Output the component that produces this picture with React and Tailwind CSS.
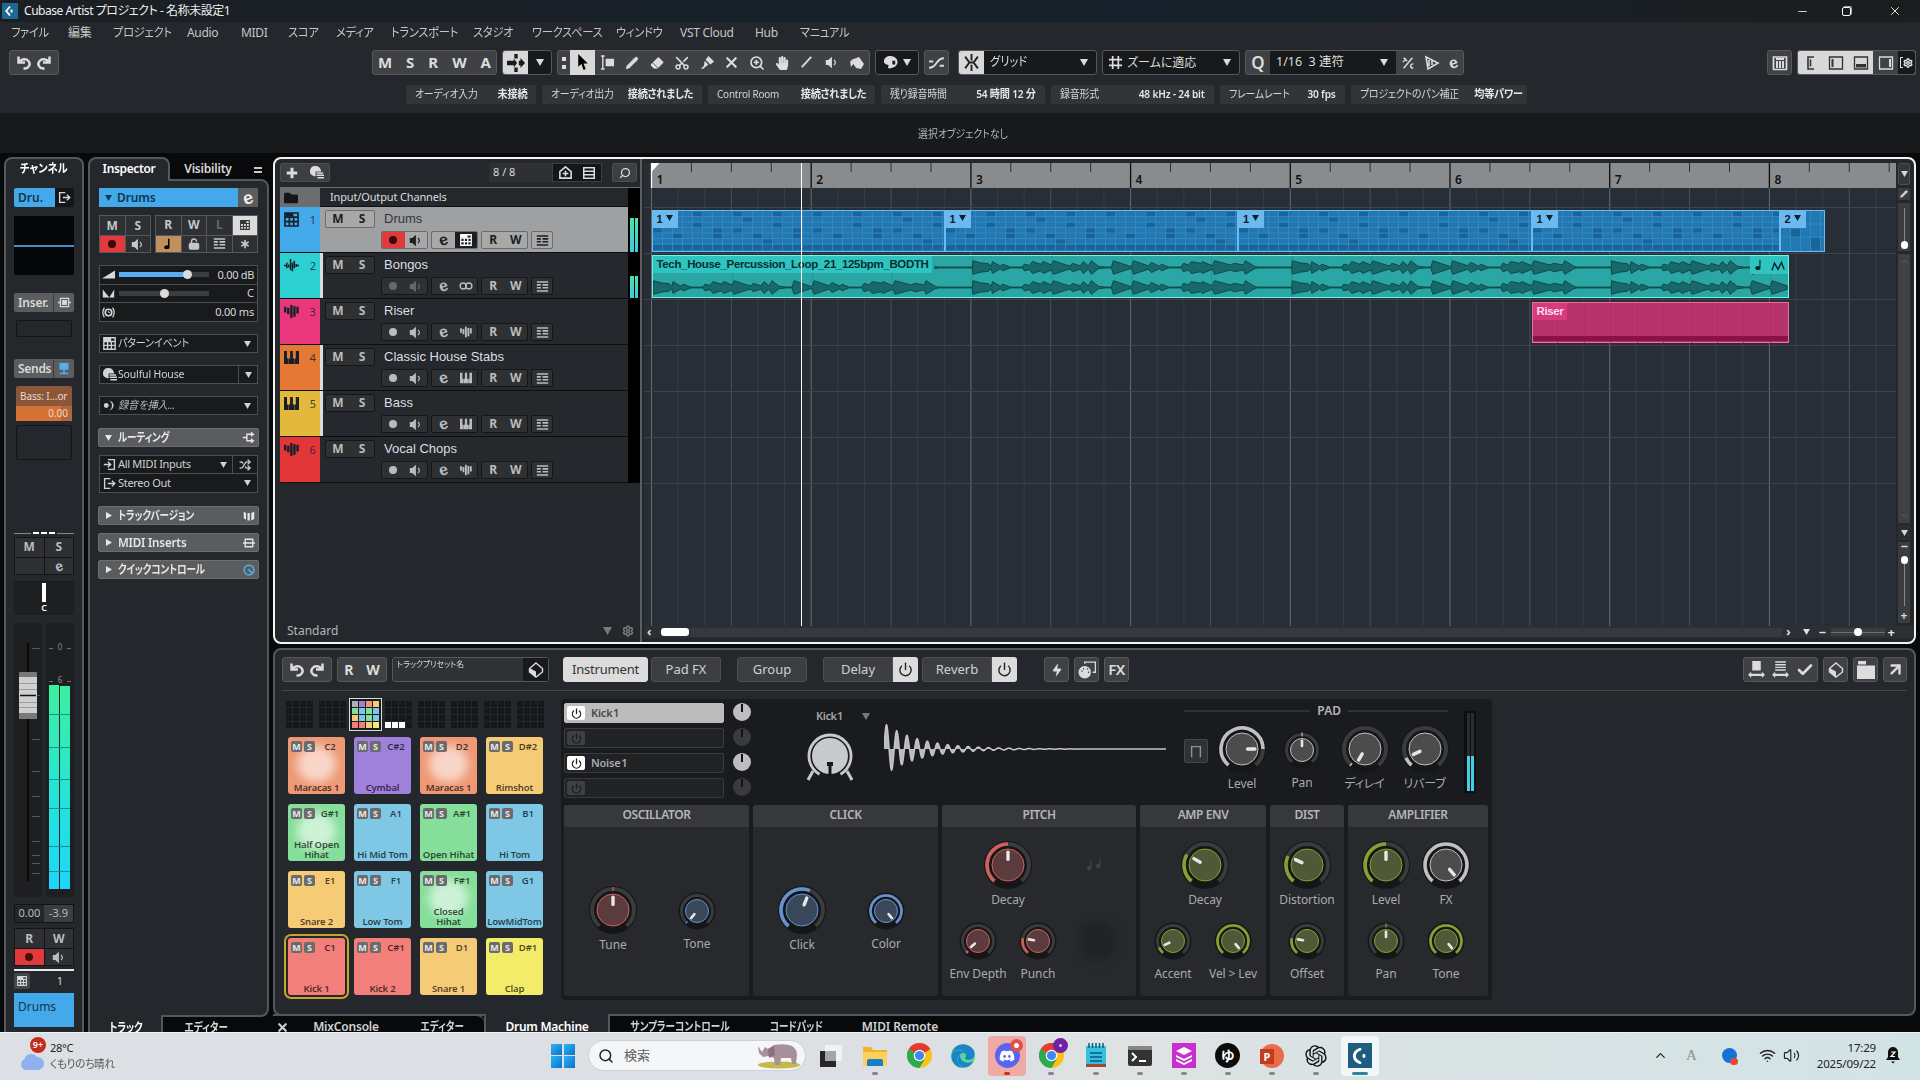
import clsx from "clsx";
import {
  Pencil, Eraser, Scissors, X, ZoomIn, Volume2, Wifi, Search, Settings,
  Zap, Power, Check, ArrowUpRight, Shuffle, LockOpen, Asterisk, Minus, ChevronUp,
} from "lucide-react";
import { FaDiscord, FaEdge, FaFolder, FaHandPaper } from "react-icons/fa";
import { RiOpenaiFill } from "react-icons/ri";

/* ---------- small icons ---------- */

const Svg = ({ w = 16, h = w, box = 16, className, children }) => (
  <svg width={w} height={h} viewBox={`0 0 ${box} ${box}`} className={clsx("shrink-0", className)} fill="currentColor">
    {children}
  </svg>
);

const Undo = ({ flip }) => (
  <Svg w={16} className={flip && "-scale-x-100"}>
    <path d="M2.500 1.500v6h6.500M3.500 7A5.300 4.600 0 1 1 9 13.500H7.500" fill="none" stroke="currentColor" strokeWidth="2.500" />
  </Svg>
);

const Down = ({ w = 8, className }) => (
  <svg width={w} height={w - 1} viewBox="0 0 8 7" fill="currentColor" className={clsx("shrink-0", className)}>
    <path d="M0 0h8L4 7z" />
  </svg>
);

const Right = () => (
  <svg width="6" height="7" viewBox="0 0 6 7" fill="currentColor" className="shrink-0">
    <path d="M0 0v7l6-3.5z" />
  </svg>
);

// kana set narrow
const Kana = ({ children, center }) => (
  <span className={clsx("inline-block scale-x-[.8] whitespace-nowrap", center ? "origin-center" : "origin-left")}>{children}</span>
);

const E = ({ className }) => (
  <span className={clsx("inline-block -rotate-[18deg] font-['Liberation_Sans'] text-[16px] leading-none font-bold", className)}>e</span>
);

const Dot = () => <span className="h-2 w-2 rounded-full bg-current" />;

const Spk = () => (
  <Svg w={13}>
    <path d="M1 5h3l4.500-4v14L4 11H1z" />
    <path d="M11 5q3.500 3 0 6" fill="none" stroke="currentColor" strokeWidth="1.5" />
  </Svg>
);

const PatternIcon = ({ w = 13 }) => (
  <Svg w={w}>
    <path d="M1 1h14v14H1zM5.700 5v10M10.300 5v10M1 5.500h14M1 10.300h14" fill="none" stroke="currentColor" strokeWidth="1.700" />
    <path d="M1 1h9v4H1z" />
  </Svg>
);

const WaveIcon = ({ w = 15 }) => (
  <Svg w={w}>
    <path d="M0 8h3M3 5v6M5 7v3M7 1v12M9 5v9M11 3v8M13 6.500v3M13 8h3" stroke="currentColor" strokeWidth="1.6" fill="none" />
  </Svg>
);

const SamplerIcon = ({ w = 13 }) => (
  <Svg w={w}>
    <path d="M0 3h2.500v6H0zM3.300 4h2.500v7H3.300zM6.600 1h2.500v14H6.600zM9.900 2.500h2.500v11H9.900zM13.200 3h2.500v7h-2.500z" />
  </Svg>
);

const KeysIcon = ({ w = 13 }) => (
  <Svg w={w}>
    <path d="M0 1h3.200v8h1.600v6H0zM6.500 1h3v8H11v6H5.200V9h1.300zM12.600 1H16v14h-4.600V9h1.200z" />
  </Svg>
);

const LanesIcon = () => (
  <Svg w={13}>
    <path d="M1 2.500h14M1 6h5M8 6h7M1 9.500h5M8 9.500h7M1 13.500h14" stroke="currentColor" strokeWidth="2" fill="none" />
  </Svg>
);

const InIcon = ({ out }) => (
  <Svg w={13}>
    {out ? (
      <path d="M9 2H2v12h7M6 8h8M11 4.500L14.500 8 11 11.500" fill="none" stroke="currentColor" strokeWidth="1.7" />
    ) : (
      <path d="M6 2h8v12H6M1 8h8M6 4.500L9.500 8 6 11.500" fill="none" stroke="currentColor" strokeWidth="1.7" />
    )}
  </Svg>
);

const Cube = ({ w = 16 }) => (
  <Svg w={w}>
    <path d="M8 1l6.500 5.500V10L8 15 1.500 10V6.500z" fill="none" stroke="currentColor" strokeWidth="1.4" />
    <path d="M1.500 6L8 9.500V15l-6.500-5z" />
  </Svg>
);

const PresetIcon = () => (
  <Svg w={15}>
    <path d="M6.500 1a5.500 5.500 0 0 0-1 10.900L7 12V7h6A6 6 0 0 0 6.500 1z" />
    <path d="M8 8.500h7M8 11h8M9 13.500h7" stroke="currentColor" strokeWidth="1.6" />
  </Svg>
);

/* ---------- top: title, menu, toolbar, info line ---------- */

const MENU = [
  ["ファイル", "w-[57px]"], ["編集", "w-[45px]"], ["プロジェクト", "w-[74px]"], ["Audio", "w-[54px]"], ["MIDI", "w-[47px]"],
  ["スコア", "w-[48px]"], ["メディア", "w-[55px]"], ["トランスポート", "w-[82px]"], ["スタジオ", "w-[59px]"],
  ["ワークスペース", "w-[84px]"], ["ウィンドウ", "w-[64px]"], ["VST Cloud", "w-[75px]"], ["Hub", "w-[45px]"], ["マニュアル", "w-[60px]"],
];

const TitleBar = () => (
  <div className="flex h-[22px] shrink-0 items-center bg-gradient-to-r from-[#1a1f23] via-[#17212b] via-60% to-[#1b1d1e]">
    <span className="ml-0.5 grid h-4 w-4 place-items-center bg-[#1b6a94] text-white">
      <Svg w={12}><path d="M8 2L3 8l5 6M10 6v4" fill="none" stroke="white" strokeWidth="2.500" /></Svg>
    </span>
    <span className="ml-[6px] text-[12px] tracking-[-0.45px] text-[#f0f0f0]">Cubase Artist プロジェクト - 名称未設定1</span>
    <div className="ml-auto flex items-center text-white">
      <Minus size={13} strokeWidth={1.5} className="mr-[33px]" />
      <span className="mr-[37px] h-[9px] w-[9px] rounded-[2px] border border-white shadow-[1px_-1px_0_0_#aaa]" />
      <X size={14} strokeWidth={1.500} className="mr-[18px]" />
    </div>
  </div>
);

const Menu = () => (
  <div className="flex h-6 shrink-0 items-center pb-[2px] pl-[11px] text-[12px] tracking-[-0.3px] text-[#c4c6c8]">
    {MENU.map(([label, w]) => (
      <span key={label} className={clsx("shrink-0 whitespace-nowrap", w)}>
        {/^[A-Z]/.test(label) || label === "編集" ? label : <span className="inline-block origin-left scale-x-[.94]">{label}</span>}
      </span>
    ))}
  </div>
);

const group = "flex h-[25px] shrink-0 items-center rounded-[3px] border border-[#56585b] bg-[#3f4144] text-[#dcdcdc]";

const Toolbar = () => (
  <div className="flex h-9 items-start pt-[4px] pr-[4px] pl-[9px]">
    <div className={clsx(group, "w-[50px] justify-around px-1")}><Undo /><Undo flip /></div>
    <div className={clsx(group, "ml-[313px] w-[125px] justify-between px-[5px] text-[15px] font-bold")}>
      {["M", "S", "R", "W", "A"].map((l) => <span key={l}>{l}</span>)}
    </div>
    <div className={clsx(group, "ml-[5px] w-[50px] overflow-hidden !bg-[#17191b]")}>
      <span className="grid h-full w-[25px] place-items-center bg-[#d8d8d8] text-[#1a1a1a]">
        <Svg w={18}><path d="M0 6h6V4l3 4-3 4v-2H0zM10.500 6H12V3.500l4 4.500-4 4.500V10h-1.500zM6.500 0h3v4h-3zM6.500 12h3v4h-3z" /></Svg>
      </span>
      <Down className="mx-auto" />
    </div>
    <div className={clsx(group, "ml-[5px] w-[313px]")}>
      <span className="flex w-3 flex-col items-center gap-1"><i className="h-1 w-1 bg-current" /><i className="h-1 w-1 bg-current" /></span>
      <span className="grid h-[25px] w-[25px] place-items-center bg-[#d8d8d8] text-black">
        <Svg w={17}><path d="M4 0v12l3-2.500L9 15l2-1-2-5h4z" /></Svg>
      </span>
      <div className="grid flex-1 grid-cols-11 place-items-center">
        <Svg w={15}><path d="M1 1h4M1 15h4M3 1v14" stroke="currentColor" strokeWidth="1.500" /><path d="M6 4h9v8H6z" /></Svg>
        <Pencil size={14} fill="currentColor" strokeWidth={1} />
        <Eraser size={16} fill="currentColor" strokeWidth={1} stroke="#333" />
        <Scissors size={16} strokeWidth={2.300} className="-rotate-90" />
        <Svg w={15}><path d="M9 1l6 6-4 3-5-5zM5 6l4 4-6 5-2-1 3-2z" /></Svg>
        <X size={17} strokeWidth={3} />
        <ZoomIn size={16} strokeWidth={2.500} />
        <FaHandPaper size={14} />
        <Svg w={15}><path d="M3 13L13 2" stroke="currentColor" strokeWidth="2" /></Svg>
        <Spk />
        <Svg w={16}><path d="M2 5l8-3 5 7-3 5-5-1zM1 6l5 1-4 5z" /></Svg>
      </div>
    </div>
    <div className={clsx(group, "ml-[5px] w-[44px] justify-around !bg-[#17191b] px-1")}>
      <Svg w={15}><path d="M8 1a7 6 0 0 1 0 13c-3 1-3-1-2-2.500S1 11 1 7s3-6 7-6zm2 5v4h3V6z" fillRule="evenodd" /></Svg><Down />
    </div>
    <div className={clsx(group, "ml-[5px] w-[25px] justify-center")}>
      <Svg w={17}><path d="M1 13c8 0 6-9 14-9M1 7h4M11 11h4" fill="none" stroke="currentColor" strokeWidth="1.800" /></Svg>
    </div>
    <div className={clsx(group, "ml-[9px] w-[139px] overflow-hidden !bg-[#17191b] text-[12.5px]")}>
      <span className="grid h-full w-[25px] place-items-center bg-[#d8d8d8] text-[#222]">
        <Svg w={17}><path d="M8 0v6M8 10v6M2 2.500l4 5.500-4 5.500M14 2.500L10 8l4 5.500M5 8h6" fill="none" stroke="currentColor" strokeWidth="1.800" /></Svg>
      </span>
      <span className="ml-1.5"><span className="inline-block origin-left scale-x-[.9]">グリッド</span></span><Down className="ml-auto mr-[8px]" />
    </div>
    <div className={clsx(group, "ml-[5px] w-[138px] !bg-[#17191b] text-[12px]")}>
      <Svg w={15} className="ml-[5px]"><path d="M5 1v14M11 1v14M1 5h14M1 11h14" stroke="currentColor" strokeWidth="1.800" /></Svg>
      <span className="ml-[4px]">ズームに適応</span><Down className="ml-auto mr-[8px]" />
    </div>
    <div className={clsx(group, "ml-[5px] w-[219px] text-[12.5px]")}>
      <span className="w-[24px] text-center text-[17px] font-semibold">Q</span>
      <span className="flex h-full w-[126px] items-center bg-[#17191b] pl-1.5">1/16&nbsp; 3 連符<Down className="ml-auto mr-[8px]" /></span>
      <span className="flex flex-1 items-center justify-around">
        <Svg w={14}><path d="M3 14L13 2M3 2l4 4M2 7l4-4M14 9c-4 0-4 5 0 5" fill="none" stroke="currentColor" strokeWidth="1.600" /></Svg>
        <Svg w={16}><path d="M2 2l12 6L4 14zM5 5v6M8 5v5" fill="none" stroke="currentColor" strokeWidth="1.600" /></Svg>
        <E />
      </span>
    </div>
    <div className={clsx(group, "ml-auto w-[25px] justify-center")}>
      <Svg w={16}><path d="M1.500 2h13v12.500h-13z" fill="none" stroke="currentColor" strokeWidth="1.700" /><path d="M4 6h2v7H4zM7 6h2v7H7zM10 6h2v7h-2zM4 3h8v2H4z" /></Svg>
    </div>
    <div className={clsx(group, "ml-[5px] w-[119px] overflow-hidden !bg-[#d8d8d8] !text-[#333]")}>
      <span className="grid w-[25px] place-items-center"><Svg w={16}><path d="M11 2H5v12h6M7.500 4.500v7" fill="none" stroke="currentColor" strokeWidth="1.600" /></Svg></span>
      <span className="grid w-[25px] place-items-center"><Svg w={16}><path d="M1.500 2h13v12h-13z" fill="none" stroke="currentColor" strokeWidth="1.300" /><path d="M3.500 4h2v8h-2z" /></Svg></span>
      <span className="grid w-[25px] place-items-center"><Svg w={16}><path d="M1.500 2h13v12h-13z" fill="none" stroke="currentColor" strokeWidth="1.300" /><path d="M3 9h10v3.500H3z" /></Svg></span>
      <span className="grid h-full w-[25px] place-items-center bg-[#3f4144] text-[#dcdcdc]"><Svg w={16}><path d="M1.500 2h13v12h-13z" fill="none" stroke="currentColor" strokeWidth="1.300" /><path d="M11 4h2v8h-2z" /></Svg></span>
      <span className="flex h-full flex-1 items-center justify-center bg-[#17191b] text-[#dcdcdc]"><i className="h-[11px] w-[3px] border border-r-0 border-current" /><Settings size={10} strokeWidth={3.500} /></span>
    </div>
  </div>
);

const INFO = [
  ["オーディオ入力", "未接続", "w-[130px]"], ["オーディオ出力", "接続されました", "w-[160px]"], ["Control Room", "接続されました", "w-[167px]"],
  ["残り録音時間", "54 時間 12 分", "w-[164px]"], ["録音形式", "48 kHz - 24 bit", "w-[163px]"], ["フレームレート", "30 fps", "w-[125px]"],
  ["プロジェクトのパン補正", "均等パワー", "w-[176px]"],
];

const InfoLine = () => (
  <div className="flex h-[31px] gap-[6px] pt-[3px] pl-[406px]">
    {INFO.map(([k, v, w]) => (
      <div key={k} className={clsx("flex h-[19px] shrink-0 items-center justify-between rounded-[2px] bg-[#323438] px-[9px] text-[11px] tracking-[-0.2px] whitespace-nowrap text-[#d4d4d4]", w)}>
        <span className="inline-block origin-left scale-x-[.9]">{k}</span>
        <span className="inline-block origin-right scale-x-[.92] font-semibold text-[#e6e6e6]">{v}</span>
      </div>
    ))}
  </div>
);

/* ---------- channel strip ---------- */

const cell = "grid place-items-center bg-[#2e3033]";

const FADER_MARKS = [25, 72, 116, 148, 173, 193, 218, 232, 240, 250];

const ChannelStrip = () => (
  <div className="mt-[4px] flex w-[80px] flex-col rounded-t-lg border-2 border-b-0 border-[#55585a] bg-[#24272b] px-[8px] text-[#d8d8d8]">
    <div className="mt-[1px] h-[21px] text-center text-[12px] font-semibold whitespace-nowrap text-white"><span className="inline-block scale-x-[.86]">チャンネル</span></div>
    <div className="mt-[7px] flex h-[19px] items-center">
      <span className="flex h-full w-[41px] items-center rounded-l-[2px] bg-[#44a9ea] pl-1 text-[12px] font-semibold text-[#10364f]">Dru.</span>
      <span className="grid h-full flex-1 place-items-center bg-[#141618]"><InIcon out /></span>
    </div>
    <div className="mt-[9px] flex h-[59px] items-center bg-[#060708]"><i className="h-[2px] w-full bg-[#3f8fcb]" /></div>
    <div className="mt-[18px] flex h-[19px] items-center rounded-[2px] bg-[#5a5c5e] text-[12px] font-semibold">
      <span className="w-[40px] border-r border-[#3a3c3e] pl-1 tracking-[-0.2px]">Inser.</span>
      <Svg w={13} className="mx-auto"><path d="M3 3h10v10H3zM0 8h3M13 8h3" fill="none" stroke="currentColor" strokeWidth="1.600" /><path d="M5 5h6v6H5z" /></Svg>
    </div>
    <div className="mx-[2px] mt-[8px] h-[17px] rounded-[2px] border border-[#131517]" />
    <div className="mt-[22px] flex h-[19px] items-center rounded-[2px] bg-[#5a5c5e] text-[12px] font-semibold">
      <span className="w-[40px] border-r border-[#3a3c3e] pl-[4px] tracking-[-0.3px]">Sends</span>
      <Svg w={12} className="mx-auto text-[#56aef0]"><path d="M2 0h12v9H2zM7 9h2v6H7zM2 13h12v2H2z" /></Svg>
    </div>
    <div className="mx-[2px] mt-[8px] flex h-[35px] flex-col rounded-[2px] bg-[#8b5738] text-[10px] leading-[20px] text-[#ecd9cb]">
      <span className="h-[20px] pl-[4px] tracking-[-0.1px] whitespace-nowrap">Bass: I...or</span>
      <span className="h-[15px] bg-gradient-to-r from-[#d47236] from-80% to-[#b0673b] to-80% pr-[4px] text-right leading-[15px]">0.00</span>
    </div>
    <div className="mx-[2px] mt-[4px] h-[35px] rounded-[2px] border border-[#131517]" />
    <div className="mt-[72px] flex h-[2px] items-center justify-between">
      <i className="h-px w-[17px] bg-[#85878a]" /><i className="h-[2px] w-[22px] border-t-2 border-dashed border-white" /><i className="h-px w-[17px] bg-[#85878a]" />
    </div>
    <div className="mt-[3px] grid h-[38px] grid-cols-2 gap-px border border-[#121416] bg-[#121416] text-[12px] leading-[16px] font-bold text-[#b9bbbd]">
      <span className={cell}>M</span><span className={cell}>S</span><span className={cell} /><span className={cell}><E className="!text-[14px]" /></span>
    </div>
    <div className="mt-[6px] flex h-[34px] flex-col items-center rounded-[3px] border border-[#1b1d1f] bg-[#1d1f20] text-[9px] leading-[12px] font-semibold text-white">
      <i className="mt-px h-[19px] w-1 bg-white" />C
    </div>
    <div className="mt-[8px] flex h-[274px] gap-1">
      <div className="w-[28px] rounded-[3px] bg-[#1d1f20]">
        <svg width="28" height="274">
          <path d="M14 20v238" stroke="#0a0808" strokeWidth="2" />
          {FADER_MARKS.map((y) => <path key={y} d={`M18 ${y}.5h8`} stroke="#55585a" />)}
          <rect x="5" y="49" width="18" height="47" rx="1" fill="#77797b" />
          <rect x="5" y="54" width="18" height="36" fill="#cfcfcf" />
          <path d="M5 60.500h18M5 66.500h18M5 79.500h18M5 84.500h18" stroke="#9d9d9d" />
          <path d="M6 72.500h16" stroke="#111" strokeWidth="1.500" />
        </svg>
      </div>
      <div className="w-[28px] rounded-[3px] bg-[#1d1f20]">
        <svg width="28" height="274">
          <defs>
            <linearGradient id="meter" x1="0" y1="0" x2="0" y2="1">
              <stop offset="0" stopColor="#3cf0a0" /><stop offset="0.6" stopColor="#22e3dc" /><stop offset="1" stopColor="#1fd5fa" />
            </linearGradient>
          </defs>
          <path d="M3 25.500h4M21 25.500h4M3 58.500h4M21 58.500h4" stroke="#6b6d6f" />
          <text x="14" y="27" fontSize="8" textAnchor="middle" fill="#8a8c8e">0</text>
          <text x="14" y="60" fontSize="8" textAnchor="middle" fill="#8a8c8e">6</text>
          <rect x="3" y="62" width="10" height="204" fill="url(#meter)" />
          <rect x="14" y="63" width="10" height="203" fill="url(#meter)" />
          <path d="M3 91.500h21M3 124.500h21M3 156.500h21M3 185.500h21M3 223.500h21M3 248.500h21" stroke="#178f93" />
        </svg>
      </div>
    </div>
    <div className="mt-[7px] grid h-[19px] shrink-0 grid-cols-2 border border-[#121416] text-center text-[11px] leading-[16px] text-[#b9bbbd]">
      <span className="bg-[#232629]">0.00</span><span className="bg-[#3b3d40]">-3.9</span>
    </div>
    <div className="mt-[5px] grid h-[38px] shrink-0 grid-cols-2 gap-px border border-[#121416] bg-[#121416] text-[12px] leading-[16px] font-bold text-[#b9bbbd]">
      <span className={cell}>R</span><span className={cell}>W</span>
      <span className="grid place-items-center bg-[#e23a3c] text-[#4a0d0e]"><Dot /></span><span className={cell}><Spk /></span>
    </div>
    <i className="mt-[3px] h-[2px] shrink-0 bg-[#e8e8e8]" />
    <div className="mt-[2px] flex h-[16px] shrink-0 items-center justify-between pr-[11px] text-[11px]">
      <span className="grid h-4 w-4 place-items-center rounded-[2px] bg-[#44474a]"><PatternIcon w={10} /></span>1
    </div>
    <div className="mt-[4px] h-[34px] shrink-0 bg-[#44a9ea] pt-[5px] pl-1 text-[12px] text-[#11364f]">Drums</div>
  </div>
);

/* ---------- inspector ---------- */

const Section = ({ children, icon, open, className }) => (
  <div className={clsx("flex h-[19px] items-center rounded-[2px] border border-[#6c6e70] bg-[#5a5c5e] text-[12px] font-semibold text-[#e6e6e6]", className)}>
    <span className="grid w-[19px] place-items-center">{open ? <Down w={7} /> : <Right />}</span>
    <span className="tracking-[-0.2px] whitespace-nowrap">{children}</span>
    <span className="ml-auto grid w-[19px] place-items-center">{icon}</span>
  </div>
);

const Slot = ({ icon, children, split, className }) => (
  <div className={clsx("mx-[1px] flex h-[19px] items-center border border-[#4c4f52] bg-[#181a1c] text-[11px] tracking-[-0.15px] text-[#d0d2d4]", className)}>
    <span className="grid w-[18px] place-items-center">{icon}</span>
    <span className="whitespace-nowrap">{children}</span>
    <span className={clsx("ml-auto grid h-full w-[19px] place-items-center", split && "border-l border-[#4c4f52]")}><Down w={7} /></span>
  </div>
);

const Slider = ({ value, fill }) => (
  <span className="ml-[4px] flex h-[5px] w-[90px] items-center bg-[#3b3e41]">
    <i className={clsx("h-full", fill && "bg-[#58aef0]")} style={{ width: value }} />
    <i className="-ml-1 h-[9px] w-[9px] rounded-full bg-[#dcdcdc]" />
  </span>
);

const Inspector = () => (
  <div className="mt-[4px] ml-1 flex w-[181px] flex-col text-[#d8d8d8]">
    <div className="flex h-[22px]">
      <div className="relative -mb-[2px] h-[24px] w-[82px] shrink-0 rounded-t-lg border-2 border-b-0 border-[#55585a] bg-[#24272b] text-center text-[12px] leading-[20px] font-semibold tracking-[-0.35px] text-white">Inspector</div>
      <div className="w-[76px] text-center text-[12px] leading-[23px] font-semibold tracking-[-0.2px]">Visibility</div>
      <span className="mt-[10px] ml-[8px] h-[6px] w-[8px] border-y-2 border-[#c8c8c8]" />
    </div>
    <div className="h-[838px] rounded-tr-lg rounded-br-lg border-2 border-[#55585a] bg-[#24272b] px-[8px] pt-[7px]">
      <div className="mx-[1px] flex h-[19px] items-center bg-[#44a9ea] text-[12px] font-semibold tracking-[-0.1px] text-[#0f3550]">
        <span className="grid w-[18px] place-items-center"><Down w={7} /></span>Drums
        <span className="ml-auto grid h-full w-[20px] place-items-center bg-[#5a5c5e] text-[#ececec]"><E className="!text-[18px]" /></span>
      </div>
      <div className="mx-[1px] mt-[8px] flex gap-[4px] text-[12px] leading-[16px] font-bold text-[#c4c6c8]">
        <div className="grid h-[38px] w-[52px] grid-cols-2 gap-px bg-[#55585a] p-px">
          <span className={cell}>M</span><span className={cell}>S</span>
          <span className="grid place-items-center bg-[#e23a3c] text-[#3a090a]"><Dot /></span><span className={cell}><Spk /></span>
        </div>
        <div className="grid h-[38px] flex-1 grid-cols-4 gap-px bg-[#55585a] p-px">
          <span className={cell}>R</span><span className={cell}>W</span><span className={clsx(cell, "text-[#66686a]")}>L</span>
          <span className="grid place-items-center bg-[#dcdcdc] text-[#333]"><PatternIcon w={10} /></span>
          <span className="grid place-items-center bg-[#c0905c] text-black">
            <Svg w={12}><path d="M8 1h2v11a3.500 2.500 0 1 1-2-2z" /></Svg>
          </span>
          <span className={cell}><LockOpen size={12} strokeWidth={3} className="[&>rect]:fill-current" /></span><span className={cell}><LanesIcon /></span><span className={cell}><Asterisk size={14} strokeWidth={3} /></span>
        </div>
      </div>
      <div className="mx-[1px] mt-[12px] h-[57px] divide-y divide-[#4c4f52] border border-[#4c4f52] bg-[#181a1c] text-[11px] [&>div]:flex [&>div]:h-[18.500px] [&>div]:items-center [&>div]:pr-[3px] [&>div]:pl-[2px]">
        <div><Svg w={13}><path d="M0 13h16V3z" /></Svg><Slider value={68} fill /><span className="ml-auto tracking-[-0.3px]">0.00 dB</span></div>
        <div><Svg w={13}><path d="M1 3v10h8zM15 3v10H9z" /></Svg><Slider value={45} /><span className="ml-auto">C</span></div>
        <div><Svg w={13}><path d="M3 2q-4 6 0 12M13 2q4 6 0 12" fill="none" stroke="currentColor" strokeWidth="1.500" /><circle cx="8" cy="8" r="4" fill="none" stroke="currentColor" strokeWidth="2" /><path d="M8 6v2h2" stroke="currentColor" fill="none" /></Svg><span className="ml-auto tracking-[-0.2px]">0.00 ms</span></div>
      </div>
      <Slot className="mt-[12px]" icon={<PatternIcon />}><span className="inline-block origin-left scale-x-[.91]">パターンイベント</span></Slot>
      <Slot className="mt-[12px]" icon={<PresetIcon />} split>
        <span className="inline-block origin-left scale-x-[.95]">Soulful House</span>
      </Slot>
      <Slot className="mt-[12px]" icon={<Svg w={13}><circle cx="4" cy="8" r="3" /><path d="M7 2a6 6 0 1 1 0 12q4-1 4-6t-4-6z" /></Svg>}><i className="inline-block origin-left scale-x-[.93] text-[#b5b7b9]">録音を挿入...</i></Slot>
      <Section className="mt-[13px]" open icon={<Svg w={13}><path d="M1 8h5M14 4H6v8h8M11 1.500L14 4l-3 2.500M11 9.500l3 2.500-3 2.500" fill="none" stroke="currentColor" strokeWidth="1.700" /></Svg>}><Kana>ルーティング</Kana></Section>
      <div className="mx-[1px] mt-[8px] h-[38px] border border-[#4c4f52] bg-[#181a1c] text-[11px] tracking-[-0.3px] text-[#d0d2d4]">
        <div className="flex h-[18px] items-center border-b border-[#4c4f52]">
          <span className="grid w-[18px] place-items-center"><InIcon /></span>All MIDI Inputs
          <Down w={7} className="mr-[5px] ml-auto" />
          <span className="grid h-full w-[25px] place-items-center border-l border-[#4c4f52]"><Shuffle size={12} strokeWidth={2.500} /></span>
        </div>
        <div className="flex h-[18px] items-center"><span className="grid w-[18px] place-items-center"><InIcon out /></span>Stereo Out<Down w={7} className="mr-[6px] ml-auto" /></div>
      </div>
      <Section className="mt-[13px]" icon={<Svg w={12}><path d="M1 2l3 2v9l-3-2zM6 4h3v10H6zM11 4l4-2v10l-4 2z" /></Svg>}><Kana>トラックバージョン</Kana></Section>
      <Section className="mt-[8px]" icon={<Svg w={12}><path d="M3 3h10v10H3zM0 8h16" fill="none" stroke="currentColor" strokeWidth="1.800" /></Svg>}><span className="inline-block origin-left scale-x-[.97]">MIDI Inserts</span></Section>
      <Section className="mt-[8px]" icon={<Svg w={12} className="text-[#4fb0f2]"><circle cx="8" cy="8" r="6.500" fill="none" stroke="currentColor" strokeWidth="2" /><path d="M7 7l5 5" stroke="currentColor" strokeWidth="2" /></Svg>}><Kana>クイックコントロール</Kana></Section>
    </div>
    <div className="flex h-[15px] text-[12px] leading-[16px] font-semibold whitespace-nowrap">
      <div className="relative -mt-[2px] w-[75px] shrink-0 border-x-2 border-[#55585a] bg-[#24272b] pt-[5px] text-center text-white"><Kana center>トラック</Kana></div>
      <div className="w-[87px] pt-[3px] text-center"><Kana center>エディター</Kana></div>
    </div>
  </div>
);

/* ---------- track list ---------- */

const TRACKS = [
  { n: 1, name: "Drums", color: "bg-[#44a9ea]", type: PatternIcon, extra: PatternIcon, selected: true, meter: 34 },
  { n: 2, name: "Bongos", color: "bg-[#2dd0d0]", type: WaveIcon, sliver: true, meter: 22 },
  { n: 3, name: "Riser", color: "bg-[#ea377c]", type: SamplerIcon, extra: SamplerIcon },
  { n: 4, name: "Classic House Stabs", color: "bg-[#e67836]", type: KeysIcon, extra: KeysIcon, sliver: true },
  { n: 5, name: "Bass", color: "bg-[#e3b93c]", type: KeysIcon, extra: KeysIcon, sliver: true },
  { n: 6, name: "Vocal Chops", color: "bg-[#e23638]", type: SamplerIcon, extra: SamplerIcon },
];

const Track = ({ t }) => {
  const box = clsx("grid h-[18px] place-items-center overflow-hidden rounded-[2px] border leading-[16px]", t.selected ? "border-[#6a6c6e] bg-[#a8a8a8]" : "border-[#141618] bg-[#2e3032]");
  const Type = t.type;
  const Extra = t.extra;
  return (
    <div className="flex h-[46px] shrink-0">
      <div className={clsx("flex w-[348px] border-b border-[#0c0e10]", t.selected ? "bg-[#9fa0a1] text-[#1c1e20]" : "bg-[#25282c] text-[#b9bbbd]")}>
        <div className={clsx("flex w-[40px] justify-between px-[4px] pt-[5px] text-[11px] text-[#16202a]", t.color)}>
          <Type w={15} /><span className="leading-[15px] opacity-80">{t.n}</span>
        </div>
        <i className={clsx("w-[3px]", t.sliver && "bg-[#dcdcdc]")} />
        <div className="flex flex-col pt-[3px] pl-[2px]">
          <div className="flex h-[18px] items-center">
            <div className={clsx(box, "w-[50px] grid-cols-2 text-[12px] font-bold")}><span>M</span><span>S</span></div>
            <span className={clsx("ml-[9px] font-['Liberation_Sans'] text-[13px]", t.selected ? "text-[#33353a]" : "text-[#dcdee0]")}>{t.name}</span>
          </div>
          <div className="mt-[3px] ml-[56px] flex gap-[3px] text-[12px] font-bold">
            <div className={clsx(box, "w-[47px] grid-cols-2", t.n === 2 && "text-[#65686a]")}>
              <span className={clsx("grid h-full w-full place-items-center", t.selected && "bg-[#e23a3c] text-[#3a090a]")}><Dot /></span><Spk />
            </div>
            <div className={clsx(box, "w-[47px] grid-cols-2")}>
              <E />
              <span className={clsx("grid h-full w-full place-items-center", t.selected && "bg-[#1c1e20] text-white")}>
                {Extra ? <Extra w={12} /> : <Svg w={14}><circle cx="4.800" cy="8" r="3.500" fill="none" stroke="currentColor" strokeWidth="1.600" /><circle cx="11.200" cy="8" r="3.500" fill="none" stroke="currentColor" strokeWidth="1.600" /></Svg>}
              </span>
            </div>
            <div className={clsx(box, "w-[47px] grid-cols-2")}><span>R</span><span>W</span></div>
            <div className={clsx(box, "w-[22px]")}><LanesIcon /></div>
          </div>
        </div>
      </div>
      <div className="flex flex-1 items-end justify-center gap-px bg-black pb-[1px]">
        {t.meter && [0, 1].map((i) => <i key={i} className="w-[3.5px] bg-gradient-to-t from-[#3ccbe0] to-[#4fe0a8]" style={{ height: t.meter }} />)}
      </div>
    </div>
  );
};

const TrackList = () => (
  <div className="flex w-[367px] shrink-0 flex-col border-r-2 border-[#5c5e60] pl-[5px]">
    <div className="mt-[4px] flex h-[19px] shrink-0 items-center text-[#dcdcdc]">
      <div className="flex h-full w-[50px] items-center justify-around rounded-[2px] border border-[#4c4e50] bg-[#3d3f42]">
        <Svg w={12}><path d="M6 1h4v5h5v4h-5v5H6v-5H1V6h5z" /></Svg><PresetIcon />
      </div>
      <div className="ml-[159px] flex h-full w-[63px] items-center bg-[#2e3033] pl-[4px] text-[11px]">8 / 8</div>
      <div className="flex h-full w-[50px] items-center justify-around border border-[#3c3f42] bg-[#141618]">
        <Svg w={15}><path d="M2 7l6-5 6 5v7H2zM5 9h6M8 6v6" fill="none" stroke="currentColor" strokeWidth="1.700" /></Svg>
        <Svg w={14}><path d="M2 2h12v12H2zM2 6h12M2 10h12" fill="none" stroke="currentColor" strokeWidth="1.700" /></Svg>
      </div>
      <div className="ml-[10px] grid h-full w-[25px] place-items-center rounded-[2px] border border-[#4c4e50] bg-[#3d3f42]"><Search size={12} strokeWidth={2.500} className="-scale-x-100" /></div>
    </div>
    <div className="mt-[5px] flex h-[20px] shrink-0 border-t border-[#6a6c6e]">
      <div className="w-[40px] bg-[#6b6d6f] pt-[3px] pl-[4px] text-[#141618]"><FaFolder size={14} /></div>
      <div className="w-[308px] border-b border-[#0c0e10] pl-[10px] text-[11px] leading-[18px] tracking-[-0.15px] text-[#dcdee0]">Input/Output Channels</div>
      <div className="flex-1 bg-black" />
    </div>
    {TRACKS.map((t) => <Track key={t.n} t={t} />)}
    <div className="mt-auto flex h-[23px] items-center pr-[6px] pl-[7px] text-[12px] text-[#b4b6b8]">
      Standard
      <Down w={9} className="ml-auto text-[#77797b]" /><Settings size={12} strokeWidth={3} className="ml-[10px] text-[#77797b]" />
    </div>
  </div>
);

/* ---------- timeline ---------- */

const X0 = 7.500;
const BAR = 159.700;
const bars = Array.from({ length: 8 }, (_, i) => i);

// one two-bar loop of the percussion: [offset, half height]
const LOOP = [
  [0, 0.5], [0.5, 8], [8, 5.500], [16, 4.500], [19, 1.500], [20, 7], [28, 1.500], [30, 4], [38, 0.500], [50, 0.500], [52, 4], [57, 2.500], [60, 7], [68, 4],
  [71, 7], [79, 3], [81, 8], [94, 3], [98, 2], [100, 5], [108, 2], [111, 7], [116, 2], [119, 8], [126, 1.500], [133, 0.500], [139, 0.500], [141, 8],
  [151, 4], [159, 1], [161, 8], [176, 2], [179, 6], [187, 1.500], [189, 4], [196, 0.500], [209, 0.500], [211, 5], [216, 3], [219, 7], [228, 5], [230, 7],
  [240, 2], [242, 8], [258, 3], [262, 5], [271, 3], [273, 8], [282, 1.500], [285, 0.500], [318, 0.500],
];

const wave = (cy, from, to) => {
  const pts = [];
  for (let s = 0; s < 4; s++) LOOP.forEach(([x, h]) => pts.push([s * BAR * 2 + x, h * 0.850]));
  const vis = pts.filter(([x]) => x >= from && x <= to);
  const top = vis.map(([x, h]) => `${x.toFixed(1)},${cy - h}`);
  const bottom = vis.slice().reverse().map(([x, h]) => `${x.toFixed(1)},${cy + h}`);
  return [...top, ...bottom].join(" ");
};

const hit = (c, r) => {
  const m = c % 32;
  if (r === 6) return true;
  if (r === 0) return m % 4 === 0 && m > 0;
  if (r === 1) return m === 9 || m === 25;
  if (r === 2) return m % 8 === 4;
  if (r === 3) return m % 8 === 0 || m % 8 === 6;
  if (r === 4) return m % 4 === 2;
  return m === 11 || m === 27;
};

const PatternClip = ({ x, w, label = 1, sparse }) => (
  <div className="absolute top-[46.5px] h-[42px] overflow-hidden border border-[#66bcf5] bg-[#2278b2]" style={{ left: x, width: w }}>
    <svg width={w} height="40" className="block">
      {!sparse && Array.from({ length: 7 }, (_, r) =>
        Array.from({ length: 30 }, (_, c) => hit(c, r) && <rect key={`${r}-${c}`} x={c * 10} y={r * 5.500 + 1} width="9.500" height="4.800" fill="#17659b" />)
      )}
      {sparse && <><rect x="10" y="18" width="10" height="8" fill="#17659b" /><rect x="30" y="27" width="10" height="12" fill="#17659b" /></>}
      {Array.from({ length: Math.ceil(w / 10) }, (_, c) => <path key={c} d={`M${c * 10 - 0.500} 0v40`} stroke="#3b8ac2" strokeWidth="0.8" />)}
      {(sparse ? [13, 26] : [5.500, 11, 16.500, 22, 27.500, 33]).map((y) => <path key={y} d={`M0 ${y}h${w}`} stroke="#3b8ac2" strokeWidth="0.8" />)}
    </svg>
    <span className="absolute top-0 left-0 flex h-[17px] w-[25px] gap-[3px] bg-[#6db8ec] pt-[1px] pl-[4px] font-['Liberation_Sans'] text-[11px] leading-[15px] font-bold text-[#08202f]">{label}<Down w={7} className="mt-[3px]" /></span>
  </div>
);

const Timeline = () => (
  <div className="flex flex-1 flex-col pl-[2px]">
    <div className="flex h-[467px] pt-[4px]">
      {/* canvas with its own coordinates, origin at the left edge of the ruler */}
      <div className="relative h-[463px] w-[1252px] overflow-hidden bg-[#282e36]">
        <svg width="1252" height="463" className="absolute inset-0">
          <rect x={X0} y="0" width="1245" height="25" fill="#8a8b8f" />
          {bars.map((b) => (
            <g key={b}>
              {[1, 2, 4, 5].map((s) => <path key={s} d={`M${X0 + b * BAR + (s * BAR) / 6} 25v438`} stroke="#363d45" />)}
              <path d={`M${X0 + (b + 0.500) * BAR} 25v438`} stroke="#4a5159" />
              <path d={`M${X0 + b * BAR} 25v438`} stroke="#646a71" />
              {[1, 2, 3].map((q) => <path key={q} d={`M${X0 + (b + q / 4) * BAR} 0v9`} stroke="#2b2d30" />)}
              <path d={`M${X0 + b * BAR} 0v25`} stroke={b ? "#0c0d0e" : "#ffffff"} strokeWidth="1.300" />
              <text x={X0 + b * BAR + 5} y="21" fontSize="12" fontWeight="600" fill="#111" fontFamily="Noto Sans">{b + 1}</text>
            </g>
          ))}
          {[44.500, 90.500, 136.500, 182.500, 228.500, 274.500, 320.500].map((y) => <path key={y} d={`M0 ${y}h1252`} stroke="#3d444c" />)}
          <path d={`M${X0} 0h8l-8 9z`} fill="#fff" />
        </svg>
        <PatternClip x={7.500} w={293} />
        <PatternClip x={300.500} w={293.500} />
        <PatternClip x={594} w={293.500} />
        <PatternClip x={887.500} w={248} />
        <PatternClip x={1135.500} w={45} label={2} sparse />
        <div className="absolute top-[92px] left-[7.5px] h-[42.5px] w-[1137px] overflow-hidden border border-[#6df2e6] bg-[#2aa6a4]">
          <svg width="1137" height="41" className="block">
            {bars.map((b) => <path key={b} d={`M${b * BAR + 79.500} 0v41M${b * BAR + 159.500} 0v41`} stroke="#249693" />)}
            <polygon points={wave(11.500, 280, 1118)} fill="#19686a" stroke="#0d4446" strokeWidth="0.900" />
            <polygon points={wave(31.500, 0, 1137)} fill="#19686a" stroke="#0d4446" strokeWidth="0.900" />
          </svg>
          <span className="absolute top-0 left-0 h-[17px] w-[279px] bg-[#2fc4bf] pl-[4px] font-['Liberation_Sans'] text-[11.500px] leading-[17px] font-bold tracking-[-0.350px] whitespace-nowrap text-[#06302f]">Tech_House_Percussion_Loop_21_125bpm_BODTH</span>
          <span className="absolute top-0 right-0 flex h-[18px] w-[38px] items-center justify-around bg-[#2fc4bf] text-[#04211f]">
            <Svg w={12}><path d="M8.500 1H10v11a3.500 2.500 0 1 1-1.500-2z" /></Svg>
            <Svg w={14}><path d="M1 14L4 6l4 7 4-8 3 8" fill="none" stroke="currentColor" strokeWidth="1.600" /></Svg>
          </span>
        </div>
        <div className="absolute top-[138.5px] left-[887.5px] h-[41.5px] w-[257px] border border-[#f26aa2] bg-[#b5326a]">
          <svg width="255" height="40" className="block">
            {[24, 51, 77, 104, 130, 158, 184, 210, 237].map((x) => <path key={x} d={`M${x}.5 0v40`} stroke="#c02563" />)}
            <rect y="33" width="255" height="5" fill="#8a1244" />
          </svg>
          <span className="absolute top-0 left-0 h-[17px] w-[34px] bg-[#d83b7c] pl-[4px] font-['Liberation_Sans'] text-[11.500px] leading-[17px] font-bold tracking-[-0.400px] text-[#fbdde9]">Riser</span>
        </div>
        <div className="absolute top-0 left-[157px] h-full w-px bg-white" />
      </div>
      <div className="ml-[2px] flex w-[12px] flex-col items-center text-[#d8d8d8]">
        <span className="grid h-[22px] w-full place-items-center rounded-[2px] border border-[#4a4c4e] bg-[#34363a]"><Down w={7} /></span>
        <span className="mt-[3px] grid h-[12px] w-full place-items-center bg-[#3a3c40]"><Pencil size={8} fill="currentColor" /></span>
        <span className="mt-[3px] flex h-[48px] w-full flex-col items-center bg-[#3a3c40] pt-[5px]"><i className="h-[33px] w-px bg-[#85878a]" /><i className="h-[8px] w-[7px] rounded-full bg-white" /></span>
        <span className="mt-[3px] flex h-[269px] w-full flex-col items-center justify-between bg-[#3f4145] py-[3px] text-[#6c6e71]"><ChevronUp size={9} /><ChevronUp size={9} className="rotate-180" /></span>
        <span className="mt-[2px] grid h-[15px] w-full place-items-center bg-[#2b2e32]"><Down w={7} /></span>
        <span className="mt-[2px] flex h-[81px] w-full flex-col items-center bg-[#3a3c40]">
          <Minus size={9} strokeWidth={3.500} /><i className="mt-[5px] h-[8px] w-[7px] rounded-full bg-white" /><i className="h-[42px] w-px bg-[#85878a]" /><span className="mt-[4px] text-[12px] leading-[12px] font-bold">+</span>
        </span>
      </div>
    </div>
    <div className="flex h-[12px] items-center bg-[#2c2f33] text-[#e0e0e0]">
      <span className="w-[17px] pl-[3px] text-[12px] leading-[10px] font-bold">‹</span>
      <i className="h-[8px] w-[28px] rounded-[3px] bg-white" />
      <i className="ml-[2px] h-[9px] flex-1 bg-[#36393d]" />
      <span className="w-[14px] text-center text-[12px] leading-[10px] font-bold">›</span>
      <Down w={7} className="ml-[7px]" />
      <Minus size={9} strokeWidth={3.500} className="ml-[8px]" />
      <span className="ml-[4px] flex w-[54px] items-center justify-center bg-[#3a3c40]"><i className="h-px flex-1 bg-[#6c6e71]" /><i className="h-[8px] w-[8px] rounded-full bg-white" /><i className="h-px flex-1 bg-[#6c6e71]" /></span>
      <span className="mr-[19px] ml-[3px] text-[13px] leading-[10px] font-bold">+</span>
    </div>
  </div>
);

/* ---------- lower zone: drum machine ---------- */

const TONES = {
  red: ["#d0605c", "#5c3b3f"],
  blue: ["#6593d2", "#3a485c"],
  green: ["#8aa02e", "#4e5937"],
  gray: ["#bfc0c1", "#4c4c4d"],
};

const polar = (c, r, deg) => {
  const a = ((deg - 90) * Math.PI) / 180;
  return [c + r * Math.cos(a), c + r * Math.sin(a)];
};

const arc = (c, r, a, b) => {
  const [x1, y1] = polar(c, r, a);
  const [x2, y2] = polar(c, r, b);
  return `M${x1} ${y1}A${r} ${r} 0 ${b - a > 180 ? 1 : 0} 1 ${x2} ${y2}`;
};

// angle runs from -140 to 140, zero points straight up
const Knob = ({ label, angle, tone, big, bipolar, cls }) => {
  const s = big ? 52 : 40;
  const c = s / 2;
  const R = big ? 21 : 15.500;
  const r = big ? 16 : 11.500;
  const [line, fill] = TONES[tone];
  const [px, py] = polar(c, r * 0.800, angle);
  const [qx, qy] = polar(c, r * 0.350, angle);
  return (
    <div className={clsx("flex shrink-0 flex-col items-center", cls)}>
      <svg width={s} height={s}>
        <circle cx={c} cy={c} r={R + 3} fill="#151618" />
        <path d={arc(c, R, -140, 140)} stroke="#393b3d" strokeWidth={big ? 4 : 3} fill="none" />
        {bipolar ? (
          <path d={`M${c} ${c - R - 2}v4`} stroke={line} strokeWidth="1.200" />
        ) : (
          <path d={arc(c, R, -140, Math.max(angle, -136))} stroke={line} strokeWidth={big ? 3.500 : 2.600} fill="none" />
        )}
        <circle cx={c} cy={c} r={r} fill={fill} stroke={line} strokeWidth="1" />
        <path d={`M${qx} ${qy}L${px} ${py}`} stroke="#e6e6e6" strokeWidth={big ? 3.400 : 2.600} strokeLinecap="round" />
      </svg>
      <span className={clsx("text-[12px] leading-[16px] tracking-[-0.1px] whitespace-nowrap text-[#a9abad]", big ? "mt-[1px]" : "mt-[5px]")}>{label}</span>
    </div>
  );
};

const PADS = [
  ["C2", "Maracas 1", "bg-[#ee9874]", 1], ["C#2", "Cymbal", "bg-[#9f80da]"], ["D2", "Maracas 1", "bg-[#ee9874]", 1], ["D#2", "Rimshot", "bg-[#f6cb75]"],
  ["G#1", "Half Open Hihat", "bg-[#85de9a]", 1], ["A1", "Hi Mid Tom", "bg-[#7ec8e6]"], ["A#1", "Open Hihat", "bg-[#85de9a]"], ["B1", "Hi Tom", "bg-[#7ec8e6]"],
  ["E1", "Snare 2", "bg-[#f6cb75]"], ["F1", "Low Tom", "bg-[#7ec8e6]"], ["F#1", "Closed Hihat", "bg-[#85de9a]", 1], ["G1", "LowMidTom", "bg-[#7ec8e6]"],
  ["C1", "Kick 1", "bg-[#f37f7a]"], ["C#1", "Kick 2", "bg-[#f37f7a]"], ["D1", "Snare 1", "bg-[#f6cb75]"], ["D#1", "Clap", "bg-[#f3ec68]"],
];

const MiniBank = ({ i }) => (
  <div className={clsx("grid h-[33px] w-[33px] grid-cols-4 gap-px p-[3px]", i === 2 && "bg-[#1a1c1e] outline-1 -outline-offset-1 outline-[#dcdcdc]")}>
    {PADS.map(([note, , color], p) => (
      <i key={note} className={i === 2 ? (p === 0 ? "bg-[#b0b0b0]" : color) : i === 3 && p > 11 && p < 15 ? "bg-white" : "bg-[#15171a]"} />
    ))}
  </div>
);

const Pad = ({ pad: [note, name, color, lit], selected }) => (
  <div className={clsx("relative flex h-[57px] w-[57px] flex-col rounded-[3px]", color, selected ? "outline-2 outline-offset-2 outline-[#c9a32c]" : "overflow-hidden")}>
    {lit && <i className="absolute inset-x-[9px] top-[9px] h-[36px] rounded-full bg-white/60 blur-[5px]" />}
    <div className="relative flex items-center gap-[2px] pt-[4px] pl-[3px] text-[9px] leading-[11px] font-bold text-[#e8e8e8]">
      <span className="w-[11px] rounded-[2px] bg-[#6b6b6e] text-center">M</span>
      <span className="w-[11px] rounded-[2px] bg-[#6b6b6e] text-center">S</span>
      <span className="flex-1 pr-[2px] text-center text-[9.500px] font-semibold text-black/70">{note}</span>
    </div>
    <span className="relative mt-auto px-[1px] pb-px text-center text-[9.500px] leading-[10px] font-semibold tracking-[-0.150px] text-black/70">{name}</span>
  </div>
);

const Layer = ({ name, selected }) => (
  <div className="flex h-[25px] items-start">
    <div className={clsx("flex h-[20px] w-[160px] items-center rounded-[2px] border px-[2px]", selected ? "border-[#bcbcbc] bg-[#bcbcbc]" : "border-[#393b3d] bg-[#202224]")}>
      <span className={clsx("grid h-[14px] w-[18px] place-items-center rounded-[2px]", name ? "bg-white text-[#222]" : "bg-[#3f4042] text-[#1a1b1d]")}><Power size={11} strokeWidth={2.800} /></span>
      <span className={clsx("ml-[6px] text-[11px] font-semibold tracking-[-0.2px] [word-spacing:-2px]", selected ? "text-[#4a4a4a]" : "text-[#a9abad]")}>{name}</span>
    </div>
    <span className={clsx("ml-[9px] flex h-[18px] w-[18px] justify-center rounded-full", name ? "bg-[#bdbebf]" : "bg-[#3a3b3d]")}><i className="mt-[1px] h-[8px] w-[2px] bg-[#111]" /></span>
  </div>
);

const Module = ({ title, w, children }) => (
  <div className={clsx("flex h-[191px] shrink-0 flex-col overflow-hidden rounded-[3px] bg-[#27292d]", w)}>
    <div className="h-[22px] shrink-0 bg-[#36383b] text-center text-[12px] leading-[20px] font-semibold tracking-[-0.400px] text-[#b4b6b8]">{title}</div>
    {children}
  </div>
);

// decaying sine preview of the kick
const kickPath = () => {
  let d = "M0 25";
  for (let x = 0; x <= 282; x += 0.500) {
    const a = 26 * Math.exp(-x / 36) * Math.sin((x / 10.200) * 2 * Math.PI);
    d += `L${x} ${(25 - a).toFixed(2)}`;
  }
  return d;
};

const SynthPanel = () => (
  <div className="ml-[8px] h-[301px] w-[931px] rounded-[4px] bg-[#1a1b1e] pt-[4px] pl-[3px]">
    <div className="flex h-[102px]">
      <div className="w-[187px]"><Layer name="Kick 1" selected /><Layer /><Layer name="Noise 1" /><Layer /></div>
      <div className="flex w-[130px] flex-col items-center pl-[27px]">
        <div className="mt-[5px] flex w-full items-center text-[11px] text-[#a4a6a8]"><span className="ml-[38px] font-semibold tracking-[-0.400px] [word-spacing:-2px]">Kick 1</span><Down w={8} className="ml-[19px] text-[#77797b]" /></div>
        <svg width="52" height="52" viewBox="0 0 52 52" className="mt-[5px] mr-[0px]">
          <path d={arc(26, 21, -150, 150)} fill="none" stroke="#c9cacb" strokeWidth="2.800" />
          <circle cx="26" cy="26" r="18" fill="#c9cacb" />
          <path d="M23 32h6v4h-1.500v10h-3V36H23z" fill="#17181a" />
          <path d="M9 41L4 50M43 41l5 9" stroke="#c9cacb" strokeWidth="3" />
        </svg>
      </div>
      <svg width="282" height="50" className="mt-[21px] ml-[3px]">
        <path d={kickPath()} fill="#b9babb" stroke="#c4c5c6" strokeWidth="1.500" />
      </svg>
      <div className="ml-[18px] w-[264px]">
        <div className="flex h-[16px] items-center gap-[7px] text-[12px] font-semibold text-[#b4b6b8]"><i className="h-[2px] flex-1 bg-[#303235]" />PAD<i className="h-[2px] w-[100px] bg-[#303235]" /></div>
        <div className="mt-[4px] flex">
          <span className="mt-[16px] grid h-[24px] w-[24px] shrink-0 place-items-center rounded-[2px] border border-[#45474a] bg-[#2f3134] text-[#909294]">
            <Svg w={14}><path d="M3 15V3h10v12" fill="none" stroke="currentColor" strokeWidth="1.600" /></Svg>
          </span>
          <div className="ml-[6px] grid grid-cols-[56px_64px_61px_59px]">
            <Knob big tone="gray" angle={90} label="Level" />
            <Knob tone="gray" angle={0} bipolar label="Pan" cls="pt-[7px]" />
            <Knob big tone="gray" angle={-150} label="ディレイ" />
            <Knob big tone="gray" angle={-115} label="リバーブ" />
          </div>
        </div>
      </div>
      <div className="mt-[8px] ml-[16px] flex h-[82px] w-[12px] justify-center gap-px bg-[#0d0e10] p-[2px]">
        {[0, 1].map((i) => <span key={i} className="flex w-[3px] items-end bg-[#2b2c2e]"><i className="h-[35px] w-full bg-[#42cfe0]" /></span>)}
      </div>
    </div>
    <div className="flex gap-[4px]">
      <Module title="OSCILLATOR" w="w-[185px]">
        <div className="flex pt-[57px]">
          <Knob big tone="red" angle={0} bipolar label="Tune" cls="ml-[23px]" />
          <Knob tone="blue" angle={-140} label="Tone" cls="mt-[7px] ml-[38px]" />
        </div>
      </Module>
      <Module title="CLICK" w="w-[185px]">
        <div className="flex pt-[57px]">
          <Knob big tone="blue" angle={22} label="Click" cls="ml-[23px]" />
          <Knob tone="blue" angle={140} label="Color" cls="mt-[7px] ml-[38px]" />
        </div>
      </Module>
      <Module title="PITCH" w="w-[194px]">
        <div className="flex h-[94px] pt-[12px] pl-[40px]">
          <Knob big tone="red" angle={0} label="Decay" />
          <Svg w={18} className="mt-[17px] ml-[53px] text-[#404245]"><path d="M4 3v8a2 2 0 1 1-1-2V3zM12 1v8a2 2 0 1 1-1-2V1z" /></Svg>
        </div>
        <div className="flex pl-[6px]">
          <Knob tone="red" angle={-130} label="Env Depth" cls="w-[60px]" /><Knob tone="red" angle={-80} label="Punch" cls="w-[60px]" />
          <i className="ml-[12px] h-[40px] w-[36px] rounded-full bg-[#212326] blur-[4px]" />
        </div>
      </Module>
      <Module title="AMP ENV" w="w-[126px]">
        <div className="flex h-[94px] justify-center pt-[12px]"><Knob big tone="green" angle={-60} label="Decay" cls="ml-[4px]" /></div>
        <div className="flex pl-[3px]"><Knob tone="green" angle={-115} label="Accent" cls="w-[60px]" /><Knob tone="green" angle={140} label="Vel > Lev" cls="w-[60px]" /></div>
      </Module>
      <Module title="DIST" w="w-[74px]">
        <div className="flex h-[94px] justify-center pt-[12px]"><Knob big tone="green" angle={-65} label="Distortion" /></div>
        <div className="flex justify-center"><Knob tone="green" angle={-80} label="Offset" /></div>
      </Module>
      <Module title="AMPLIFIER" w="w-[140px]">
        <div className="flex h-[94px] pt-[12px] pl-[8px]"><Knob big tone="green" angle={0} label="Level" cls="w-[60px]" /><Knob big tone="gray" angle={140} label="FX" cls="w-[60px]" /></div>
        <div className="flex pl-[8px]"><Knob tone="green" angle={0} bipolar label="Pan" cls="w-[60px]" /><Knob tone="green" angle={140} label="Tone" cls="w-[60px]" /></div>
      </Module>
    </div>
  </div>
);

const tabBtn = "grid h-[25px] shrink-0 place-items-center rounded-[3px] border border-[#4c4e51] bg-[#3c3e41] text-[13px] text-[#cfd1d3]";

const LowerToolbar = () => (
  <div className="mx-[7px] flex h-[41px] items-start border-b border-[#45484b] pt-[7px]">
    <div className={clsx(group, "w-[50px] justify-around px-1")}><Undo /><Undo flip /></div>
    <div className={clsx(group, "ml-[5px] w-[50px] justify-around text-[14px] font-bold")}><span>R</span><span>W</span></div>
    <div className={clsx(group, "ml-[5px] w-[157px] !bg-[#303235]")}>
      <span className="self-start pl-[4px] text-[8.500px] leading-[12px]"><span className="inline-block origin-left scale-x-[.92]">トラックプリセット名</span></span>
      <span className="ml-auto grid h-full w-[25px] place-items-center bg-[#17191b]"><Cube /></span>
    </div>
    <div className={clsx(tabBtn, "ml-[14px] w-[85px] !border-[#dcdcdc] !bg-[#dcdcdc] tracking-[-0.2px] !text-[#333]")}>Instrument</div>
    <div className={clsx(tabBtn, "ml-[3px] w-[70px]")}>Pad FX</div>
    <div className={clsx(tabBtn, "ml-[16px] w-[70px]")}>Group</div>
    <div className={clsx(tabBtn, "ml-[16px] w-[70px] rounded-r-none")}>Delay</div>
    <span className="grid h-[25px] w-[25px] place-items-center rounded-r-[3px] bg-[#dcdcdc] text-[#222]"><Power size={15} strokeWidth={2.200} /></span>
    <div className={clsx(tabBtn, "ml-[4px] w-[70px] rounded-r-none")}>Reverb</div>
    <span className="grid h-[25px] w-[25px] place-items-center rounded-r-[3px] bg-[#dcdcdc] text-[#222]"><Power size={15} strokeWidth={2.200} /></span>
    <div className={clsx(group, "ml-[27px] w-[25px] justify-center")}><Zap size={14} fill="currentColor" strokeWidth={1} className="scale-x-75" /></div>
    <div className={clsx(group, "ml-[5px] w-[25px] justify-center")}>
      <Svg w={18}><circle cx="6" cy="10" r="5.500" /><path d="M6 2.500V1h9.500v9H13" fill="none" stroke="currentColor" strokeWidth="1.200" /><path d="M3 9h1M4.500 7h1M8 7h1M9 10h1" stroke="#333" strokeWidth="1.300" /></Svg>
    </div>
    <div className={clsx(group, "ml-[5px] w-[25px] justify-center text-[15px] font-semibold tracking-[-0.500px]")}>FX</div>
    <div className={clsx(group, "ml-auto w-[75px] justify-around")}>
      <Svg w={17}><path d="M4 0h8v9H4zM0 13l3-3v2h10v-2l3 3-3 3v-2H3v2z" /></Svg>
      <Svg w={17}><path d="M3 1h10M3 3.500h10M3 6h10M3 8.500h10" stroke="currentColor" strokeWidth="1.300" /><path d="M0 13l3-3v2h10v-2l3 3-3 3v-2H3v2z" /></Svg>
      <Check size={18} strokeWidth={3.500} />
    </div>
    <div className={clsx(group, "ml-[5px] w-[25px] justify-center")}><Cube /></div>
    <div className={clsx(group, "ml-[5px] w-[25px] justify-center")}><Svg w={18}><path d="M1 0h7v3H1zM0 4h16v12H0z" /></Svg></div>
    <div className={clsx(group, "ml-[5px] w-[24px] justify-center")}><ArrowUpRight size={19} strokeWidth={3} /></div>
  </div>
);

const LowerZone = () => (
  <div className="mt-[4px] flex flex-1 flex-col">
    <div className="h-[368px] shrink-0 rounded-lg border-2 border-[#55585a] bg-[#24272b]">
      <LowerToolbar />
      <div className="flex pt-[8px] pl-[8px]">
        <div className="-mt-[1px] w-[270px]">
          <div className="flex">{Array.from({ length: 8 }, (_, i) => <MiniBank key={i} i={i} />)}</div>
          <div className="mt-[6px] grid w-fit grid-cols-[repeat(4,66px)] gap-y-[10px] pl-[5px]">
            {PADS.map((p, i) => <Pad key={p[0]} pad={p} selected={i === 12} />)}
          </div>
        </div>
        <SynthPanel />
      </div>
    </div>
    <div className="flex h-[17px] text-[12px] leading-[16px] font-semibold whitespace-nowrap text-[#d0d2d4]">
      <div className="-mt-[2px] flex w-[211px] shrink-0 rounded-tr-lg border-t-2 border-[#55585a] pt-[3px]">
        <X size={13} strokeWidth={4} className="mt-[2px] ml-[3px]" />
        <span className="ml-[24px] w-[66px] text-center tracking-[-0.2px]">MixConsole</span>
        <span className="ml-[34px] w-[58px] text-center"><Kana center>エディター</Kana></span>
      </div>
      <span className="relative -mt-[2px] w-[126px] shrink-0 border-x-2 border-[#55585a] bg-[#24272b] pt-[5px] text-center tracking-[-0.25px] text-white">Drum Machine</span>
      <span className="mt-[3px] ml-[7px] w-[126px] text-center"><Kana center>サンプラーコントロール</Kana></span>
      <span className="mt-[3px] ml-[16px] w-[74px] text-center"><Kana center>コードパッド</Kana></span>
      <span className="mt-[3px] ml-[27px] w-[80px] text-center tracking-[-0.1px]">MIDI Remote</span>
    </div>
  </div>
);

/* ---------- windows taskbar ---------- */

const Chrome = ({ s = 25 }) => (
  <svg width={s} height={s} viewBox="0 0 24 24">
    <circle cx="12" cy="12" r="12" fill="#fbc116" />
    <path d="M12 12L1.600 6A12 12 0 0 1 22.400 6z" fill="#e33b2e" />
    <path d="M12 12L1.600 6A12 12 0 0 0 12 24l5.200-9z" fill="#2da94f" />
    <circle cx="12" cy="12" r="5.600" fill="#fff" /><circle cx="12" cy="12" r="4.400" fill="#4285f4" />
  </svg>
);

const TaskIcon = ({ children, dot, cls }) => (
  <div className={clsx("relative flex h-[40px] w-[38px] shrink-0 items-center justify-center rounded-[4px]", cls)}>
    {children}
    {dot && <i className={clsx("absolute bottom-[1px] h-[3px] rounded-full", dot)} />}
  </div>
);

const Taskbar = () => (
  <div className="flex h-[48px] shrink-0 items-center border-t border-[#eef0f1] bg-gradient-to-r from-[#dcdfe3] from-55% via-[#dfe2e2] to-[#d2e3e6] pb-[2px]">
    <div className="relative ml-[19px] h-[34px] w-[25px]">
      <svg width="25" height="18" viewBox="0 0 25 18" className="absolute bottom-[3px] left-0"><path d="M6 18a6 6 0 0 1-.500-11A7 7 0 0 1 18 5a6 6 0 0 1 1 13z" fill="#8fb2ee" /></svg>
      <span className="absolute -top-[2px] right-[-2px] grid h-[16px] w-[16px] place-items-center rounded-full bg-[#c42b1c] text-[9px] font-semibold text-white">9+</span>
    </div>
    <div className="ml-[6px] w-[100px] text-[11px] leading-[16px] tracking-[-0.300px] text-[#222]">28°C<br /><span className="inline-block origin-left scale-x-[.96] text-[#555]">くもりのち晴れ</span></div>
    <div className="ml-[401px] grid h-[24px] w-[24px] grid-cols-2 gap-[1.500px]">
      {[0, 1, 2, 3].map((i) => <i key={i} className="bg-gradient-to-br from-[#2fb4f2] to-[#0a72d0]" />)}
    </div>
    <div className="ml-[13px] flex h-[31px] w-[218px] items-center rounded-full border border-[#cfd2d5] bg-[#f5f6f8] pl-[9px] text-[13px] text-[#5c5e60]">
      <Search size={16} strokeWidth={2.200} className="text-[#222]" />
      <span className="ml-[10px]">検索</span>
      <svg width="46" height="26" viewBox="0 0 46 26" className="mr-[3px] ml-auto">
        <ellipse cx="23" cy="22" rx="21" ry="3.500" fill="#c5b84d" />
        <path d="M2 3l4 6 3-5 3 2 6-4q12-2 18 1 5 3 5 9l-1 9h-4l-1-6H25l-1 7h-5l-1-7-6-2-5 1-4-4z" fill="#a8909a" />
        <path d="M12 6l6-3 1 9-6 3z" fill="#8b727c" />
      </svg>
    </div>
    <div className="ml-[6px] flex gap-[6.100px]">
      <TaskIcon><span className="relative h-[22px] w-[22px]"><i className="absolute bottom-0 left-0 h-[16px] w-[16px] bg-[#262626]" /><i className="absolute top-0 right-0 h-[16px] w-[17px] bg-[#f4f4f4] opacity-90" /><i className="absolute top-[6px] left-[5px] h-[10px] w-[11px] bg-[#a5a5a5]" /></span></TaskIcon>
      <TaskIcon dot="w-[6px] bg-[#85878a]"><svg width="24" height="24" viewBox="0 0 24 24"><path d="M0 3h8l2 3h14v16H0z" fill="#f0b429" /><path d="M0 8h24v14H0z" fill="#fcd05a" /><path d="M4 22v-5q0-2 2-2h12q2 0 2 2v5z" fill="#1c7cc9" /></svg></TaskIcon>
      <TaskIcon><Chrome /></TaskIcon>
      <TaskIcon><span className="grid h-[24px] w-[24px] place-items-center rounded-full bg-[#5fd49a] text-[#1a84c8]"><FaEdge size={24} /></span></TaskIcon>
      <TaskIcon cls="bg-[#efaaa6]" dot="w-[6px] bg-[#c4351c]"><span className="grid h-[25px] w-[25px] place-items-center rounded-full bg-[#5865f2] text-white"><FaDiscord size={16} /></span><i className="absolute top-[3px] right-[3px] h-[13px] w-[13px] rounded-full border-4 border-[#e1514c] bg-white" /></TaskIcon>
      <TaskIcon dot="w-[6px] bg-[#85878a]"><Chrome /><i className="absolute top-[2px] right-[2px] h-[15px] w-[15px] rounded-full border-[6px] border-[#7021a5] bg-[#e3c8f2]" /></TaskIcon>
      <TaskIcon dot="w-[6px] bg-[#85878a]"><svg width="20" height="25" viewBox="0 0 20 25"><path d="M0 3h20v19H0z" fill="#35c0e2" /><path d="M0 21h20v3H0z" fill="#a5482c" /><path d="M3 0v5M6.500 0v5M10 0v5M13.500 0v5M17 0v5M4 10h12M4 14h12M4 18h12" stroke="#0c5b78" strokeWidth="1.500" /></svg></TaskIcon>
      <TaskIcon dot="w-[6px] bg-[#85878a]"><svg width="24" height="20" viewBox="0 0 24 20"><rect width="24" height="20" rx="2" fill="#333" /><rect width="24" height="4" rx="1" fill="#858585" /><path d="M4 7l4 4-4 4M11 15h7" stroke="#fff" strokeWidth="2" fill="none" /></svg></TaskIcon>
      <TaskIcon dot="w-[6px] bg-[#85878a]"><svg width="24" height="25" viewBox="0 0 24 25"><rect width="24" height="25" fill="#c92fd0" /><path d="M12 4l8 4-8 4-8-4zM4 12l8 4 8-4v2l-8 4-8-4zM4 16l8 4 8-4v2l-8 4-8-4z" fill="#fff" /></svg></TaskIcon>
      <TaskIcon dot="w-[6px] bg-[#85878a]"><span className="grid h-[25px] w-[25px] place-items-center rounded-full bg-[#0c0c0c] text-[14px] leading-none font-bold text-white">ゆ</span></TaskIcon>
      <TaskIcon dot="w-[6px] bg-[#85878a]"><span className="relative h-[24px] w-[24px] rounded-full bg-[#ea6c47]"><i className="absolute top-[5px] left-0 grid h-[15px] w-[14px] place-items-center bg-[#c03c1d] text-[11px] font-bold text-white not-italic">P</i></span></TaskIcon>
      <TaskIcon dot="w-[6px] bg-[#85878a]"><RiOpenaiFill size={26} className="text-[#151515]" /></TaskIcon>
      <TaskIcon cls="bg-[#f3f6f8]" dot="w-[16px] bg-[#2b8a9a]"><span className="grid h-[25px] w-[24px] place-items-center bg-[#1d5e80]"><Svg w={18}><path d="M8 2Q3 4 3 8t5 6M11.500 7.500v1" fill="none" stroke="white" strokeWidth="2.600" strokeLinecap="round" /></Svg></span></TaskIcon>
    </div>
    <div className="mr-[20px] ml-auto flex items-center text-[#222]">
      <ChevronUp size={15} strokeWidth={2} />
      <span className="ml-[18px] font-['Liberation_Serif'] text-[15px] text-[#8a8c8e]">A</span>
      <span className="relative ml-[25px] h-[15px] w-[15px] rounded-full bg-[#1473d6]"><i className="absolute right-[-1px] bottom-[-2px] h-[7px] w-[8px] rounded-full bg-[#e04a32]" /></span>
      <Wifi size={17} strokeWidth={2} className="ml-[22px]" />
      <Volume2 size={17} strokeWidth={1.600} className="ml-[7px]" />
      <div className="ml-[17px] text-right text-[11.500px] leading-[16px] tracking-[-0.200px]">17:29<br />2025/09/22</div>
      <svg width="14" height="17" viewBox="0 0 14 17" className="ml-[10px]"><path d="M7 0a5 5 0 0 1 5 5v5l2 3H0l2-3V5a5 5 0 0 1 5-5zM5 14.500h4l-2 2z" fill="#111" /><path d="M5 5h4l-4 4.500h4" stroke="#fff" strokeWidth="1.200" fill="none" /></svg>
    </div>
  </div>
);

export default function App() {
  return (
    <div className="flex h-[1080px] w-[1920px] flex-col overflow-hidden bg-[#08090a] font-['Noto_Sans','Noto_Sans_CJK_JP',sans-serif] [font-feature-settings:'palt']">
      <div className="flex h-[113px] shrink-0 flex-col bg-[#24272b]">
        <TitleBar /><Menu /><Toolbar /><InfoLine />
      </div>
      <div className="h-[40px] shrink-0 bg-[#17191b] text-center text-[11px] leading-[41px] text-[#b4b6b8]"><span className="ml-[6px] inline-block scale-x-[.9]">選択オブジェクトなし</span></div>
      <div className="flex h-[879px] shrink-0 overflow-hidden pl-[4px]">
        <ChannelStrip />
        <Inspector />
        <div className="ml-[4px] flex w-[1643px] shrink-0 flex-col pt-[4px]">
          <div className="flex h-[487px] shrink-0 overflow-hidden rounded-lg border-2 border-[#f2f2f2] bg-[#24272b]">
            <TrackList /><Timeline />
          </div>
          <LowerZone />
        </div>
      </div>
      <Taskbar />
    </div>
  );
}
